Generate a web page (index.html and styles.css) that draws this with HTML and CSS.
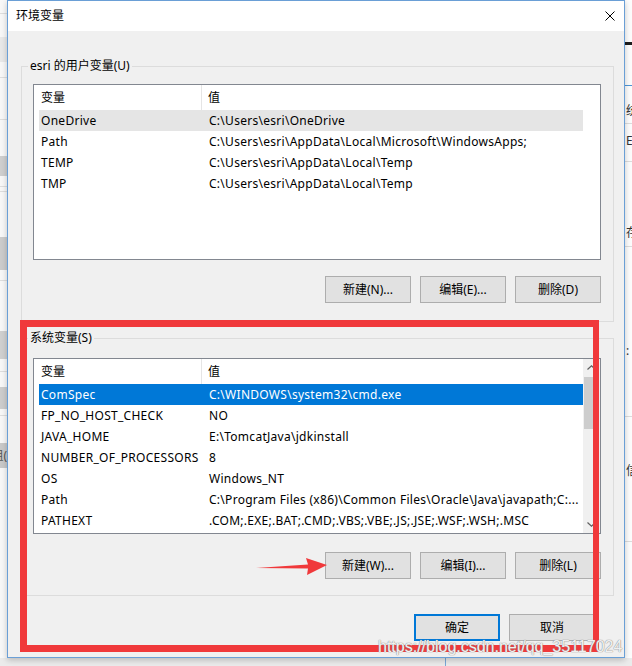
FILE: index.html
```html
<!DOCTYPE html>
<html lang="zh-CN">
<head>
<meta charset="utf-8">
<title>环境变量</title>
<link rel="stylesheet" href="styles.css">
</head>
<body>
<div class="desk">
  <div class="bg-left">
    <div class="bl w13"></div><div class="bl line"></div><div class="bl w23"></div>
    <div class="bl pale25"></div><div class="bl w15"></div><div class="bl line"></div>
    <div class="bl w41"></div><div class="bl line"></div><div class="bl w36"></div>
    <div class="bl btn20"></div><div class="bl w10"></div><div class="bl line"></div>
    <div class="bl w4"></div><div class="bl line"></div><div class="bl w45"></div>
    <div class="bl btn33"></div><div class="bl w10"></div><div class="bl line"></div>
    <div class="bl w50"></div><div class="bl btn28"></div><div class="bl w12"></div>
    <div class="bl line"></div><div class="bl w15"></div><div class="bl btn22"></div>
    <div class="bl w6"></div><div class="bl line"></div><div class="bl w27"></div>
    <div class="bl btn25"><span>组(</span></div><div class="bl rest"></div>
  </div>

  <div class="dialog">
    <div class="titlebar">
      <span class="title">环境变量</span>
      <svg class="close" width="10" height="10" viewBox="0 0 10 10"><path d="M0.5 0.5 L9.5 9.5 M9.5 0.5 L0.5 9.5" stroke="#000" stroke-width="1" fill="none"/></svg>
    </div>
    <div class="content">
      <fieldset class="group user">
        <legend>esri 的用户变量(U)</legend>
        <div class="list">
          <div class="lmain">
            <div class="lhead"><div class="c1">变量</div><div class="c2">值</div></div>
            <div class="rows">
              <div class="row hover"><span class="c1">OneDrive</span><span class="c2">C:\Users\esri\OneDrive</span></div>
              <div class="row"><span class="c1">Path</span><span class="c2">C:\Users\esri\AppData\Local\Microsoft\WindowsApps;</span></div>
              <div class="row"><span class="c1">TEMP</span><span class="c2">C:\Users\esri\AppData\Local\Temp</span></div>
              <div class="row"><span class="c1">TMP</span><span class="c2">C:\Users\esri\AppData\Local\Temp</span></div>
            </div>
          </div>
          <div class="noscroll"></div>
        </div>
        <div class="btns">
          <button class="btn">新建(N)...</button>
          <button class="btn">编辑(E)...</button>
          <button class="btn">删除(D)</button>
        </div>
      </fieldset>

      <fieldset class="group sys">
        <legend>系统变量(S)</legend>
        <div class="list">
          <div class="lmain">
            <div class="lhead"><div class="c1">变量</div><div class="c2">值</div></div>
            <div class="rows">
              <div class="row sel"><span class="c1">ComSpec</span><span class="c2">C:\WINDOWS\system32\cmd.exe</span></div>
              <div class="row"><span class="c1">FP_NO_HOST_CHECK</span><span class="c2">NO</span></div>
              <div class="row"><span class="c1">JAVA_HOME</span><span class="c2">E:\TomcatJava\jdkinstall</span></div>
              <div class="row"><span class="c1">NUMBER_OF_PROCESSORS</span><span class="c2">8</span></div>
              <div class="row"><span class="c1">OS</span><span class="c2">Windows_NT</span></div>
              <div class="row"><span class="c1">Path</span><span class="c2">C:\Program Files (x86)\Common Files\Oracle\Java\javapath;C:...</span></div>
              <div class="row"><span class="c1">PATHEXT</span><span class="c2">.COM;.EXE;.BAT;.CMD;.VBS;.VBE;.JS;.JSE;.WSF;.WSH;.MSC</span></div>
            </div>
          </div>
          <div class="scroll">
            <div class="sarrow"><svg width="9" height="5" viewBox="0 0 9 5"><path d="M0.5 4.5 L4.5 0.8 L8.5 4.5" stroke="#606060" stroke-width="1.2" fill="none"/></svg></div>
            <div class="thumb"></div>
            <div class="strack"></div>
            <div class="sarrow"><svg width="9" height="5" viewBox="0 0 9 5"><path d="M0.5 0.5 L4.5 4.2 L8.5 0.5" stroke="#606060" stroke-width="1.2" fill="none"/></svg></div>
          </div>
        </div>
        <div class="btns">
          <button class="btn">新建(W)...</button>
          <button class="btn">编辑(I)...</button>
          <button class="btn">删除(L)</button>
        </div>
      </fieldset>

      <div class="footer">
        <button class="btn default">确定</button>
        <button class="btn">取消</button>
      </div>
    </div>
  </div>

  <div class="bg-right">
    <div class="br h42"></div><div class="br black"></div><div class="br h40"></div>
    <div class="br blue"></div><div class="br h17"></div>
    <div class="br glyph">统</div><div class="br h4"></div><div class="br line"></div>
    <div class="br h9"></div><div class="br glyph">E</div><div class="br h12"></div>
    <div class="br line"></div><div class="br h63"></div><div class="br glyph">存</div>
    <div class="br h5"></div><div class="br line"></div><div class="br h96"></div>
    <div class="br glyph">:</div><div class="br h57"></div><div class="br line"></div>
    <div class="br h46"></div><div class="br glyph">信</div><div class="br h62"></div>
    <div class="br line"></div>
  </div>
</div>
<div class="bottom"><div class="bseg"></div><div class="bline"></div></div>

<div class="redbox"></div>
<svg class="arrow" width="72" height="21" viewBox="0 0 72 21"><polygon points="0,12 52,8.5 50,2 71,9 51,19 52,12.5" fill="#f0393b"/></svg>
<div class="watermark">https://blog.csdn.net/qq_35117024</div>
</body>
</html>
```
FILE: styles.css
```css
* { box-sizing: border-box; }
html, body { margin: 0; padding: 0; }
body {
  width: 632px;
  height: 666px;
  overflow: hidden;
  position: relative;
  background: #f3f3f3;
  font-family: "Noto Sans", "Noto Sans CJK SC", sans-serif;
  font-size: 12px;
  line-height: 16px;
  color: #000;
}
.desk { display: flex; height: 658px; }

/* background window strips */
.bg-left { width: 7px; display: flex; flex-direction: column; background: #f8f8f8; overflow: hidden; }
.bl { flex: none; }
.bl.line { height: 1px; background: #dedede; }
.w4 { height: 4px; } .w6 { height: 6px; } .w10 { height: 10px; } .w12 { height: 12px; }
.w13 { height: 13px; } .w15 { height: 15px; } .w23 { height: 23px; } .w27 { height: 27px; }
.w36 { height: 36px; } .w41 { height: 41px; } .w45 { height: 45px; } .w50 { height: 50px; }
.pale25 { height: 25px; background: #e9e9e9; }
.btn20 { height: 20px; background: #cfcfcf; }
.btn33 { height: 33px; background: #cccccc; }
.btn28 { height: 28px; background: #d0d0d0; }
.btn22 { height: 22px; background: #cdcdcd; }
.btn25 { height: 25px; background: #c9c9c9; display: flex; justify-content: flex-end; align-items: center; color: #555; white-space: nowrap; }
.rest { flex: 1; }

.bg-right { flex: 1; display: flex; flex-direction: column; background: #fdfdfd; overflow: hidden; }
.br { flex: none; }
.br.line { height: 1px; background: #dddddd; }
.br.black { height: 3px; background: #1e1e1e; }
.br.blue { height: 1px; background: #4f95d6; }
.br.glyph { height: 16px; color: #333; white-space: nowrap; padding-left: 1px; }
.h4 { height: 4px; } .h5 { height: 5px; } .h9 { height: 9px; } .h12 { height: 12px; }
.h17 { height: 17px; } .h40 { height: 40px; } .h42 { height: 42px; } .h46 { height: 46px; }
.h57 { height: 57px; } .h62 { height: 62px; } .h63 { height: 63px; } .h96 { height: 96px; }

.bottom { height: 8px; background: #ebebeb; display: flex; }
.bseg { width: 445px; }
.bline { width: 1px; background: #7aa8d8; }

/* dialog */
.dialog {
  width: 618px;
  flex: none;
  border: 1px solid #6a9fd6;
  display: flex;
  flex-direction: column;
  background: #f0f0f0;
  box-shadow: 0 2px 6px rgba(0, 0, 0, 0.22);
  position: relative;
  z-index: 1;
}
.titlebar {
  height: 30px;
  background: #fff;
  display: flex;
  align-items: center;
  justify-content: space-between;
  padding: 0 9px 0 8px;
  flex: none;
}
.close { display: block; }
.content {
  flex: 1;
  padding: 27px 10px 0 13px;
  display: flex;
  flex-direction: column;
}

fieldset.group {
  margin: 0;
  min-width: 0;
  border: 1px solid #dcdcdc;
  padding: 10px 12px 18px 11px;
}
fieldset.group legend {
  padding: 0 2px;
  margin-left: -5px;
  line-height: 16px;
}
fieldset.sys { margin-top: 8px; padding-top: 12px; padding-bottom: 16px; }

.list {
  height: 176px;
  border: 1px solid #828790;
  background: #fff;
  display: flex;
}
.lmain { flex: 1; min-width: 0; }
.lhead { height: 25px; display: flex; }
.lhead .c1 { width: 168px; padding-left: 7px; border-right: 1px solid #e5e5e5; display: flex; align-items: center; }
.lhead .c2 { padding-left: 6px; display: flex; align-items: center; }
.rows { padding-left: 5px; }
.row { height: 21px; display: flex; align-items: center; white-space: nowrap; letter-spacing: 0.28px; }
.row .c1 { width: 163px; padding-left: 2px; flex: none; }
.row .c2 { padding-left: 7px; flex: 1; overflow: hidden; }
.row.hover { background: #e5e5e5; }
.row.sel { background: #0078d7; color: #fff; }

.noscroll { width: 17px; }
.scroll { width: 17px; background: #f0f0f0; display: flex; flex-direction: column; }
.sarrow { height: 17px; display: flex; align-items: center; justify-content: center; }
.sarrow svg { display: block; }
.thumb { height: 52px; margin: 1px 1px 0; background: #cdcdcd; }
.strack { flex: 1; }

.btns { display: flex; justify-content: flex-end; gap: 9px; margin-top: 16px; }
.sys .btns { margin-top: 18px; }
.btn {
  width: 86px;
  height: 27px;
  padding: 0;
  background: #e1e1e1;
  border: 1px solid #adadad;
  font: inherit;
  color: #000;
}
.btn.default { border: 2px solid #0078d7; }
.footer { display: flex; justify-content: flex-end; gap: 9px; margin-top: 18px; padding-right: 19px; }

/* annotations over the screenshot */
.redbox {
  position: absolute;
  left: 20px;
  top: 320px;
  width: 579px;
  height: 332px;
  border: 7px solid #f0393b;
  border-right-width: 6px;
  z-index: 5;
}
.arrow { position: absolute; left: 256px; top: 556px; z-index: 6; }
.watermark {
  position: absolute;
  left: 378px;
  top: 638px;
  font-family: "Liberation Sans", Arial, sans-serif;
  font-size: 16px;
  line-height: 18px;
  color: rgba(255, 255, 255, 0.9);
  text-shadow: 0 0 1px #8a8a8a, 0 0 1px #8a8a8a;
  white-space: nowrap;
  z-index: 7;
}
```
